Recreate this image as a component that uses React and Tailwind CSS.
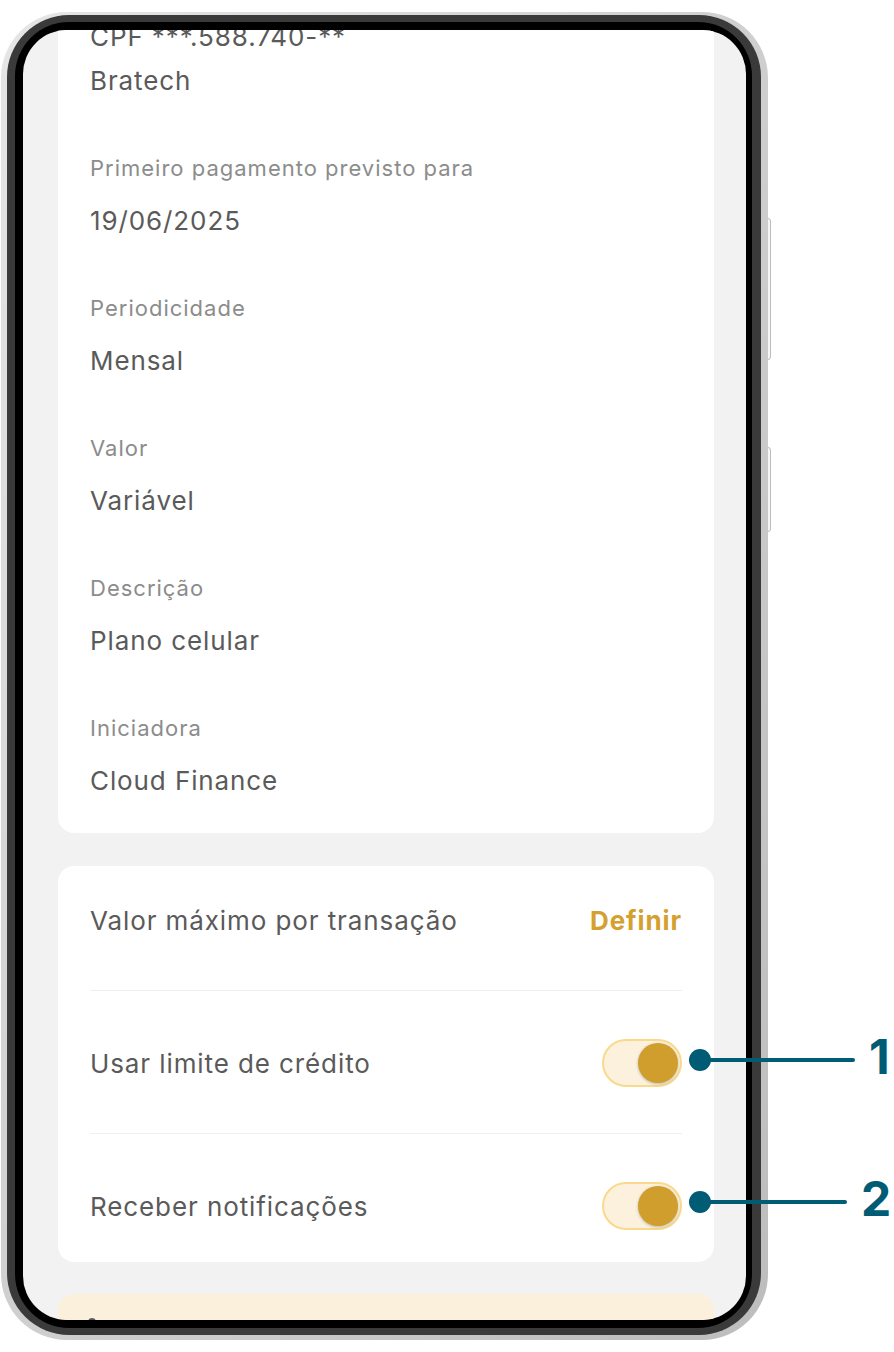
import React from 'react';

const details = [
  { label: 'Primeiro pagamento previsto para', value: '19/06/2025' },
  { label: 'Periodicidade', value: 'Mensal' },
  { label: 'Valor', value: 'Variável' },
  { label: 'Descrição', value: 'Plano celular' },
  { label: 'Iniciadora', value: 'Cloud Finance' },
];

const Toggle = () => (
  <div className="flex h-[48px] w-[80px] items-center justify-end rounded-full border-2 border-[#f9da8b] bg-[#fcf1dd] pr-[2px]">
    <div className="h-[40px] w-[40px] rounded-full bg-[#d09e2c] shadow-[0_1px_3px_rgba(0,0,0,0.25)]" />
  </div>
);

const Callout = ({ top, lineWidth, num, numLeft }) => (
  <>
    <div className="absolute left-[689px] h-[22px] w-[22px] rounded-full bg-[#005b74]" style={{ top }} />
    <div className="absolute left-[700px] h-[4px] rounded-full bg-[#005b74]" style={{ top: top + 9, width: lineWidth }} />
    <div
      className="absolute text-[48px] font-bold leading-none text-[#005b74]"
      style={{ top: top - 16, left: numLeft }}
    >
      {num}
    </div>
  </>
);

export default function App() {
  return (
    <div className="relative h-[1352px] w-[894px] overflow-hidden bg-white pl-[1px] pt-[12px] font-['Inter','Noto_Sans',sans-serif]">
      {/* side buttons */}
      <div className="absolute left-[765px] top-[218px] h-[142px] w-[6px] rounded-[3px] border border-[#bdbdbd] bg-[#f6f6f6]" />
      <div className="absolute left-[765px] top-[447px] h-[85px] w-[6px] rounded-[3px] border border-[#bdbdbd] bg-[#f6f6f6]" />

      {/* phone frame */}
      <div className="relative h-[1328px] w-[767px] rounded-[66px] bg-gradient-to-br from-[#e6e6e6] via-[#cfcfcf] to-[#bdbdbd] pb-[5px] pl-[6px] pr-[7px] pt-[3px]">
        <div className="h-full rounded-[62px] bg-[#3a3a3a] pb-[7px] pl-[8px] pr-[9px] pt-[7px]">
          <div className="h-full rounded-[54px] bg-black pb-[8px] pl-[8px] pr-[6px] pt-[8px]">
            <div className="h-full overflow-hidden rounded-[44px] bg-[#f2f2f2] pl-[35px] pr-[32px]">
              {/* details card */}
              <div className="-mt-[43px] rounded-[16px] bg-white px-[32px] pb-[34px] pt-[32px]">
                <div className="text-[26px] leading-[36px] tracking-[0.9px] text-[#5a5a5a]">CPF ***.588.740-**</div>
                <div className="mt-[8px] text-[26px] leading-[36px] tracking-[0.9px] text-[#5a5a5a]">Bratech</div>
                {details.map((d) => (
                  <div key={d.label} className="mt-[54px]">
                    <div className="text-[22px] leading-[30px] tracking-[1px] text-[#8c8c8c]">{d.label}</div>
                    <div className="mt-[20px] text-[26px] leading-[36px] tracking-[0.9px] text-[#5a5a5a]">{d.value}</div>
                  </div>
                ))}
              </div>

              {/* settings card */}
              <div className="mt-[33px] rounded-[16px] bg-white px-[32px] pb-[32px] pt-[30px] text-[26px] tracking-[0.9px]">
                <div className="flex h-[48px] items-center justify-between">
                  <span className="text-[#5a5a5a]">Valor máximo por transação</span>
                  <span className="font-bold text-[#d4a02e]">Definir</span>
                </div>
                <div className="mb-[48px] mt-[46px] h-px bg-[#efefef]" />
                <div className="flex h-[48px] items-center justify-between">
                  <span className="text-[#5a5a5a]">Usar limite de crédito</span>
                  <Toggle />
                </div>
                <div className="mb-[48px] mt-[46px] h-px bg-[#efefef]" />
                <div className="flex h-[48px] items-center justify-between">
                  <span className="text-[#5a5a5a]">Receber notificações</span>
                  <Toggle />
                </div>
              </div>

              {/* warning card (cut off) */}
              <div className="mt-[32px] h-[120px] rounded-t-[16px] bg-[#fbf0dc] px-[30px] pt-[24px]">
                <div className="h-[8px] w-[8px] rounded-full bg-[#5a5a5a]" />
              </div>
            </div>
          </div>
        </div>
      </div>

      {/* annotations */}
      <Callout top={1049} lineWidth={155} num="1" numLeft={869} />
      <Callout top={1191} lineWidth={147} num="2" numLeft={861} />
    </div>
  );
}
